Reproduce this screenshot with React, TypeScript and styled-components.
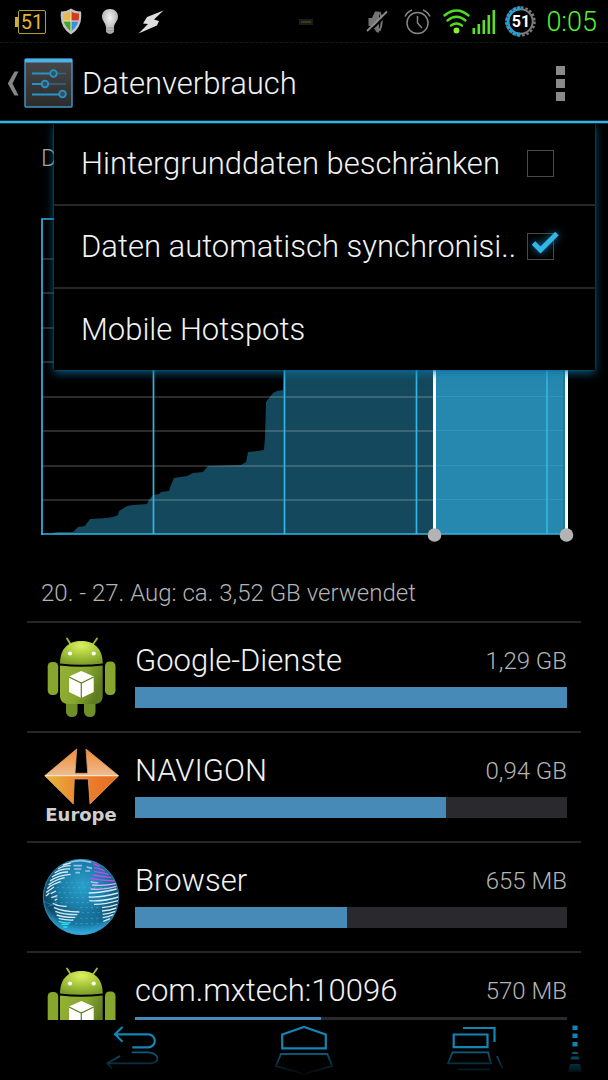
import React from 'react';
import styled, { createGlobalStyle } from 'styled-components';

const GlobalStyle = createGlobalStyle`
  * { box-sizing: border-box; }
  body { margin: 0; background: #000; }
  button { margin: 0; padding: 0; border: 0; background: none; color: inherit; font: inherit; }
  ul { margin: 0; padding: 0; list-style: none; }
  h1, h2, p { margin: 0; font-weight: inherit; }
  svg { display: block; }
`;

const Screen = styled.div`
  display: flex;
  flex-direction: column;
  height: 100vh;
  overflow: hidden;
  background: #000;
  color: #f2f2f2;
  font-family: Roboto, 'Liberation Sans', sans-serif;
  font-weight: 300;
`;

/* ---------- status bar ---------- */

const StatusBar = styled.div`
  flex: none;
  display: grid;
  grid-template-columns: 1fr auto 1fr;
  align-items: center;
  height: 43px;
  padding: 1px 11px 0 15px;
  border-bottom: 1px dashed #062020;
`;

const StatusGroup = styled.div<{ $end?: boolean; $gap: number }>`
  display: flex;
  align-items: center;
  justify-content: ${(p) => (p.$end ? 'flex-end' : 'flex-start')};
  gap: ${(p) => p.$gap}px;
`;

const BatteryBox = styled.span`
  display: flex;
  align-items: center;
  &::before {
    content: '';
    width: 3px;
    height: 10px;
    background: #d9ac2c;
  }
`;

const BatteryText = styled.span`
  width: 28px;
  height: 24px;
  border: 1px solid #b0a030;
  border-radius: 2px;
  color: #e6b530;
  font-size: 20px;
  font-weight: 400;
  line-height: 22px;
  text-align: center;
`;

const Pill = styled.span`
  width: 14px;
  height: 6px;
  border: 2px solid #1c1c1c;
  background: #3c3c10;
`;

const GearWrap = styled.span`
  display: grid;
  place-items: center;
  > * { grid-area: 1 / 1; }
`;

const GearText = styled.span`
  color: #fff;
  font-size: 16px;
  font-weight: 700;
  line-height: 20px;
`;

const Clock = styled.span`
  color: #55f22c;
  font-size: 27px;
  line-height: 32px;
`;

/* ---------- action bar ---------- */

const ActionBar = styled.header`
  flex: none;
  position: relative;
  z-index: 3;
  display: flex;
  align-items: center;
  justify-content: space-between;
  height: 80px;
  padding: 2px 43px 0 7px;
  border-bottom: 2px solid #33b5e5;
  background: #000;
  box-shadow: 0 1px 0 #0d3344, inset 0 -1px 0 #0d3344;
`;

const UpButton = styled.button`
  display: flex;
  align-items: center;
  gap: 5px;
`;

const Title = styled.h1`
  padding: 2px 0 0 4px;
  font-size: 31px;
  line-height: 40px;
`;

const OverflowButton = styled.button`
  display: flex;
  flex-direction: column;
  gap: 4px;
`;

const Dot = styled.span`
  width: 9px;
  height: 9px;
  background: #8a8a8a;
`;

/* ---------- overflow menu ---------- */

const Body = styled.div`
  flex: 1;
  min-height: 0;
  position: relative;
  overflow: hidden;
`;

const Menu = styled.div`
  position: absolute;
  z-index: 2;
  top: 0;
  left: 54px;
  right: 13px;
  background: #000;
  box-shadow: 0 0 2px #0a5c80, 0 3px 9px rgba(14, 118, 165, 0.75);
`;

const MenuItem = styled.label`
  display: flex;
  align-items: center;
  justify-content: space-between;
  height: 83px;
  padding: 0 41px 0 27px;
  border-bottom: 2px solid #262626;
  font-size: 31px;
  line-height: 40px;
  white-space: nowrap;
`;

const MenuAction = styled.button`
  display: block;
  width: 100%;
  height: 81px;
  padding: 0 27px;
  font-size: 31px;
  line-height: 40px;
  text-align: left;
`;

const CheckWrap = styled.span`
  position: relative;
  display: block;
  width: 27px;
  height: 27px;
  svg {
    position: absolute;
    left: 0;
    top: -7px;
    pointer-events: none;
    overflow: visible;
    filter: drop-shadow(0 0 4px #0a7fb5);
  }
  input:not(:checked) + svg { display: none; }
`;

const Check = styled.input`
  appearance: none;
  display: block;
  width: 27px;
  height: 27px;
  margin: 0;
  border: 1px solid #4a4a4a;
  background: #000;
`;

/* ---------- usage ---------- */

const Usage = styled.main`
  padding: 0 27px;
`;

const Cycle = styled.p`
  height: 95px;
  padding: 17px 14px 0;
  color: #a8a8a8;
  font-size: 24px;
  line-height: 36px;
`;

const ChartWrap = styled.div`
  padding: 0 14px;
  svg { width: 100%; height: 317px; overflow: visible; }
`;

const Summary = styled.h2`
  padding: 40px 14px 10px;
  color: #b4b4b4;
  font-size: 24px;
  line-height: 36px;
`;

const Row = styled.li`
  display: flex;
  align-items: flex-start;
  gap: 14px;
  height: 110px;
  padding: 14px 14px 0;
  border-top: 2px solid #262626;
`;

const AppIcon = styled.div`
  flex: none;
  width: 80px;
  height: 80px;
`;

const RowInfo = styled.div`
  flex: 1;
  padding-top: 4px;
`;

const RowHead = styled.div`
  display: flex;
  align-items: center;
  justify-content: space-between;
  height: 40px;
  margin-bottom: 6px;
`;

const AppName = styled.span`
  font-size: 31px;
  line-height: 40px;
`;

const Amount = styled.span`
  color: #b4b4b4;
  font-size: 24px;
  line-height: 36px;
`;

const Track = styled.div`
  height: 21px;
  background: #2a2a2e;
`;

const Fill = styled.div`
  height: 100%;
  background: #478ab8;
`;

const Region = styled.div`
  color: #cfcfcf;
  font-family: 'DejaVu Sans', sans-serif;
  font-size: 18px;
  font-weight: 700;
  line-height: 20px;
  text-align: center;
`;

/* ---------- navigation bar ---------- */

const NavBar = styled.nav`
  flex: none;
  position: relative;
  display: grid;
  grid-template-columns: 49px 1fr 1fr 1fr 49px;
  height: 60px;
  padding-top: 2px;
  background: #000;
`;

const NavButton = styled.button<{ $col: number; $edge?: boolean }>`
  grid-column: ${(p) => p.$col};
  display: flex;
  justify-content: ${(p) => (p.$edge ? 'flex-start' : 'center')};
  align-items: flex-start;
  padding-left: ${(p) => (p.$edge ? 8 : 0)}px;
`;

/* ---------- drawings ---------- */

const Shield = () => (
  <svg width="22" height="27" viewBox="0 0 22 27">
    <defs>
      <clipPath id="shieldClip"><path d="M11 3.5 Q14 5.500 19 5.500 Q20 17 11 23.500 Q2 17 3 5.500 Q8 5.500 11 3.500Z" /></clipPath>
    </defs>
    <path d="M11 0.500 Q15 3.500 21 3.500 Q23 19 11 26.500 Q-1 19 1 3.500 Q7 3.500 11 0.500Z" fill="#c4c4c4" />
    <g clipPath="url(#shieldClip)">
      <rect width="11" height="13" fill="#e8b84a" />
      <rect x="11" width="11" height="13" fill="#d23a1e" />
      <rect y="13" width="11" height="14" fill="#45a52a" />
      <rect x="11" y="13" width="11" height="14" fill="#3a8fe0" />
      <path d="M11 0V27M0 13H22" stroke="#e8e4d8" strokeWidth="1" />
    </g>
  </svg>
);

const Bulb = () => (
  <svg width="18" height="27" viewBox="0 0 18 27">
    <defs>
      <radialGradient id="bulbG" cx="0.5" cy="0.35" r="0.6">
        <stop offset="0" stopColor="#f2f2f2" />
        <stop offset="1" stopColor="#a8a8a8" />
      </radialGradient>
    </defs>
    <path d="M9 1C4 1 1 4.500 1 8.500C1 13 4.500 14.500 5 19V24Q9 28 13 24V19C13.500 14.500 17 13 17 8.500C17 4.500 14 1 9 1Z" fill="url(#bulbG)" />
    <path d="M5 20H13M5 22.500H13" stroke="#999" />
  </svg>
);

const Bolt = () => (
  <svg width="26" height="24" viewBox="0 0 26 24">
    <path d="M25.500 0.500L9 7L5 13.500L10 14L0.500 23.500L19 15.500L21 11L16 9.500Z" fill="#dedede" />
  </svg>
);

const Mute = () => (
  <svg width="22" height="25" viewBox="0 0 22 25">
    <path d="M2.500 9H6L9 2.500H13V23.500H11L6 17H2.500Z" fill="#747474" />
    <path d="M13.500 3Q18 12 13.500 22" stroke="#747474" strokeWidth="2" fill="none" />
    <path d="M2.500 23.500L22 4.500" stroke="#000" strokeWidth="2" />
    <path d="M1 22L21 2.500" stroke="#8c8c8c" strokeWidth="1.800" />
  </svg>
);

const Alarm = () => (
  <svg width="27" height="26" viewBox="0 0 27 26" fill="none" stroke="#858585" strokeWidth="1.500">
    <circle cx="13.500" cy="14" r="10.500" />
    <path d="M13.500 7V14L18 19M1 7.500Q3 3 8 1M26 7.500Q24 3 19 1" />
  </svg>
);

const Wifi = () => (
  <svg width="27" height="25" viewBox="0 0 27 25" fill="none" stroke="#50dc20" strokeWidth="2.300" strokeLinecap="round">
    <path d="M1.500 6.500Q13.500 -3.500 25.500 6.500" />
    <path d="M4.500 11.500Q13.500 4 22.500 11.500" />
    <path d="M8 16.500Q13.500 12.500 19 16.500" />
    <circle cx="13.500" cy="21.500" r="1.800" fill="#8cf030" stroke="#8cf030" />
  </svg>
);

const Signal = () => (
  <svg width="24" height="25" viewBox="0 0 24 25">
    {[6, 10, 14, 19, 24].map((h, i) => (
      <rect key={h} x={i * 5 + 0.5} y={25 - h} width="2.600" height={h} fill="#5ae02a" />
    ))}
  </svg>
);

const Gear = () => (
  <svg width="31" height="31" viewBox="0 0 31 31" fill="none">
    <circle cx="15.500" cy="15.500" r="14" stroke="#7a7a7a" strokeWidth="2.500" strokeDasharray="2.600 1.800" />
    <circle cx="15.500" cy="15.500" r="12.200" stroke="#7a7a7a" strokeWidth="2" />
    <path d="M15.500 1.500A14 14 0 0 0 15.500 29.500" stroke="#1fa0d8" strokeWidth="2.500" strokeDasharray="2.600 1.800" />
    <path d="M15.500 3.300A12.200 12.200 0 0 0 15.500 27.700" stroke="#1fa0d8" strokeWidth="2" />
  </svg>
);

const Chevron = () => (
  <svg width="12" height="25" viewBox="0 0 12 25">
    <path d="M7.500 0.500H11.500L5.500 12.500L11.500 24.500H7.500L0.800 12.500Z" fill="#858585" />
  </svg>
);

const SettingsIcon = () => (
  <svg width="49" height="50" viewBox="0 0 49 50">
    <defs>
      <linearGradient id="setG" x1="0" y1="0" x2="0" y2="1">
        <stop offset="0" stopColor="#484848" />
        <stop offset="1" stopColor="#2c2c2c" />
      </linearGradient>
    </defs>
    <rect x="1" y="1" width="47" height="48" rx="1" fill="url(#setG)" stroke="#3f93bf" strokeWidth="1.500" />
    <rect x="1" y="1" width="47" height="3.500" fill="#4db2e6" />
    <g stroke="#2e6a88" strokeWidth="1.600">
      <path d="M33 15.500H42M25 26H42" />
    </g>
    <g stroke="#2794c8" strokeWidth="1.800">
      <path d="M8 15.500H27M8 26H18M8 36.500H36" />
      <g fill="#38505c">
        <circle cx="29.500" cy="15.500" r="3.300" />
        <circle cx="21" cy="26" r="3.300" />
        <circle cx="38.500" cy="36" r="3.300" />
      </g>
    </g>
  </svg>
);

const AREA =
  'M11 315L17 314H32L37 309L44 308L46 305L49 301L65 300L72 299L77 297L78 293L86 288L92 287L106 286L108 282L112 277L118 276L120 274L128 273L130 267L133 260L146 258L152 255L162 254L167 248L200 247L205 244L207 234L217 233L223 232L224 219L225 184L232 175L236 173L242 172L244 120L393 60L526 10V316H11Z';

const UsageChart = () => (
  <ChartWrap>
    <svg viewBox="0 0 526 317" preserveAspectRatio="none" role="img" aria-label="Datenverbrauch">
      <defs>
        <clipPath id="before"><rect x="0" y="0" width="394" height="317" /></clipPath>
        <clipPath id="picked"><rect x="394" y="0" width="132" height="317" /></clipPath>
      </defs>
      <path d={AREA} fill="#14485c" clipPath="url(#before)" />
      <g fill="#fff" fillOpacity="0.17">
        {[40, 74, 109, 143, 178, 212, 247, 281].map((y) => (
          <rect key={y} x="1" y={y} width="525" height="2" />
        ))}
      </g>
      <path d={AREA} fill="#2688ae" clipPath="url(#picked)" />
      <g fill="#3da0c4" fillOpacity="0.5">
        {[178, 212, 247, 281].map((y) => (
          <rect key={y} x="395" y={y} width="130" height="1" />
        ))}
      </g>
      <path d="M1 317V1H526M112.500 1V316M243.500 1V316M375.500 1V316M506 1V316M0 316H526" fill="none" stroke="#33b5e5" strokeWidth="1.700" />
      <rect x="522" y="0" width="2" height="316" fill="#1b6a8a" fillOpacity="0.5" />
      <rect x="392" y="0" width="3" height="312" fill="#fff" />
      <rect x="524" y="0" width="3" height="312" fill="#fff" />
      <circle cx="393.500" cy="317" r="6.800" fill="#b4b4b4" />
      <circle cx="525.500" cy="317" r="6.800" fill="#b4b4b4" />
    </svg>
  </ChartWrap>
);

const Android = ({ id }: { id: string }) => (
  <svg width="80" height="80" viewBox="0 0 80 80">
    <defs>
      <linearGradient id={id + 'b'} x1="0" y1="0" x2="1" y2="0.400">
        <stop offset="0" stopColor="#94b234" />
        <stop offset="0.600" stopColor="#86a62e" />
        <stop offset="1" stopColor="#5f7c20" />
      </linearGradient>
      <radialGradient id={id + 'h'} cx="0.500" cy="0.200" r="0.800">
        <stop offset="0" stopColor="#dcf060" />
        <stop offset="0.500" stopColor="#a9c83c" />
        <stop offset="1" stopColor="#7d9d2a" />
      </radialGradient>
    </defs>
    <path d="M26 1.500L30 8M56 1.500L51.500 8" stroke="#9bbf38" strokeWidth="1.800" strokeLinecap="round" />
    <path d="M25 64H36.500V75Q36 80 31 80Q25.500 80 25 75ZM43 64H54.500V75Q54 80 49 80Q43.500 80 43 75Z" fill="#6f8f28" />
    <path d="M19 26.500C19 11 28 4 40.300 4S61.700 11 61.700 26.500Q40 29 19 26.500Z" fill={`url(#${id}h)`} />
    <path d="M19 28.500Q40 31 61.700 28.500V60Q61 67 54 67H27Q20 67 19 60Z" fill={`url(#${id}b)`} />
    <rect x="6.700" y="25" width="10.500" height="33" rx="4.500" fill="#86a62e" />
    <rect x="64" y="24.500" width="10.500" height="33.500" rx="4.500" fill="#86a62e" />
    <circle cx="29" cy="16.500" r="2.100" fill="#fff" />
    <circle cx="52.700" cy="16.500" r="2.100" fill="#fff" />
    <path d="M40.300 34L52.700 39.500V55L40.300 61L28 55V39.500Z" fill="#fff" />
    <path d="M28 40L40.300 46L52.700 40M40.300 46V61" fill="none" stroke="#5f7c20" strokeWidth="1.200" />
  </svg>
);

const Navigon = () => (
  <>
    <svg width="80" height="58" viewBox="0 0 80 58">
      <defs>
        <linearGradient id="navT" x1="0" y1="0" x2="0" y2="1">
          <stop offset="0" stopColor="#f08a34" />
          <stop offset="1" stopColor="#eebd92" />
        </linearGradient>
        <linearGradient id="navB" x1="0" y1="0" x2="1" y2="0">
          <stop offset="0" stopColor="#e4b83c" />
          <stop offset="0.450" stopColor="#ee8430" />
          <stop offset="1" stopColor="#e46c22" />
        </linearGradient>
      </defs>
      <path d="M35.700 2L3.700 28.700H77.700L45 2L46.700 26.300H34Z" fill="url(#navT)" />
      <path d="M3.700 28.700L32.300 57L33.300 32H47.300L49 57L77.700 28.700Z" fill="url(#navB)" />
      <path d="M35.700 2L3.700 28.700L32.300 57L33.300 32H47.300L49 57L77.700 28.700L45 2L46.700 26.300H34Z" fill="none" stroke="#dca070" strokeWidth="0.800" />
      <path d="M4 28.700H77" stroke="#fbe4c8" strokeWidth="1.300" />
    </svg>
    <Region>Europe</Region>
  </>
);

const Globe = () => (
  <svg width="80" height="80" viewBox="63 378 240 240">
    <defs>
      <radialGradient id="globeG" cx="0.520" cy="0.350" r="0.620">
        <stop offset="0" stopColor="#2ba0cc" />
        <stop offset="0.500" stopColor="#1b7ba4" />
        <stop offset="0.850" stopColor="#0d4662" />
        <stop offset="1" stopColor="#2a7ea8" />
      </radialGradient>
      <linearGradient id="globeL" x1="0" y1="0" x2="0" y2="1">
        <stop offset="0.650" stopColor="#1d9ed8" stopOpacity="0" />
        <stop offset="1" stopColor="#30b8ee" stopOpacity="0.800" />
      </linearGradient>
      <clipPath id="globeC"><circle cx="183" cy="498" r="114" /></clipPath>
    </defs>
    <circle cx="183" cy="498" r="114" fill="url(#globeG)" />
    <circle cx="183" cy="498" r="114" fill="url(#globeL)" />
    <g clipPath="url(#globeC)" fill="none">
      <path d="M120 455H250M110 470H260M115 485H200M105 500H200M105 515H205M180 530H240M185 545H240M180 562H240M165 578H240" stroke="#3db4e4" strokeWidth="3" strokeDasharray="7 9" opacity="0.6" />
      <path d="M150 394Q180 384 214 394M160 404H186M162 414H184M166 425H180M200 408L216 412M196 420H210" stroke="#8fc4ec" strokeWidth="5" />
      <g stroke="#d4ecfa" strokeWidth="4">
        <path d="M128 402L152 396M114 414Q130 404 152 404M104 426Q125 412 150 414M96 438Q120 422 144 423M90 450Q115 432 152 430M86 462Q105 446 134 440M82 473Q95 460 122 452M79 484L102 468M78 495L88 486M92 488L108 480M94 500L112 494M104 508L112 504" />
        <path d="M98 517Q118 528 140 526M102 530Q128 542 178 543M106 541Q130 551 172 551M110 552Q132 560 166 559M116 562Q136 568 160 567" />
        <path d="M206 486Q240 486 290 474M206 498Q245 500 294 486M208 509Q250 512 295 498M222 520Q260 520 294 509M246 530Q270 528 292 520M246 540Q270 538 289 531M248 550Q266 548 286 541M248 560Q264 558 280 551M250 571L270 563" />
      </g>
      <path d="M116 571Q136 577 152 575M124 580H146M130 588H142" stroke="#2ce0e8" strokeWidth="4" />
      <path d="M216 462Q250 466 288 458M212 474Q250 478 290 466M212 452Q220 456 234 455" stroke="#dcb4f4" strokeWidth="4" />
      <path d="M214 388L230 396M218 398L240 406M222 410Q240 412 254 420M222 421Q244 424 266 430M218 432Q244 436 274 440M208 442Q246 448 284 450" stroke="#c44cf0" strokeWidth="4" />
      <path d="M70 510L96 522M84 526L106 518M110 575L96 560" stroke="#2690c0" strokeWidth="2" />
    </g>
    <circle cx="183" cy="498" r="113" fill="none" stroke="#3a9cc8" strokeWidth="2" />
  </svg>
);

const Fade = ({ id }: { id: string }) => (
  <defs>
    <linearGradient id={id} gradientUnits="userSpaceOnUse" x1="0" y1="28" x2="0" y2="52">
      <stop offset="0" stopColor="#1385b5" stopOpacity="0.750" />
      <stop offset="1" stopColor="#1385b5" stopOpacity="0.050" />
    </linearGradient>
  </defs>
);

const BackIcon = () => (
  <svg width="60" height="56" viewBox="0 0 60 56" fill="none" stroke="#1385b5" strokeWidth="2.200">
    <Fade id="fBack" />
    <path d="M18.500 5L11 12.300L18.500 19.700M11 12.300H44.300A6.500 6.500 0 0 1 44.300 25.300H28.300" />
    <path d="M27.700 30.300H44Q53 31 53.500 36.500Q53 41.300 46 41.300H3.500M16 34L3.500 41.300L8 46.500" stroke="url(#fBack)" strokeWidth="1.800" />
  </svg>
);

const HomeIcon = () => (
  <svg width="60" height="56" viewBox="0 0 60 56" fill="none" stroke="#1385b5" strokeWidth="2.200">
    <Fade id="fHome" />
    <path d="M8.200 12.500L30 5L51.800 12.500V26.300H8.200Z" />
    <path d="M7 32H53.300L58 44L30 52L2 44Z" stroke="url(#fHome)" strokeWidth="1.800" />
  </svg>
);

const RecentIcon = () => (
  <svg width="60" height="56" viewBox="0 0 60 56" fill="none" stroke="#1385b5" strokeWidth="2.200">
    <Fade id="fRec" />
    <path d="M9.700 12.500H43.500V25.200H9.700ZM19 6H50.500V20" />
    <path d="M8.500 30.300H44L47 41.300H4ZM53 34L58.500 46.500M14 47.500H46" stroke="url(#fRec)" strokeWidth="1.800" />
  </svg>
);

const DotsIcon = () => (
  <svg width="16" height="56" viewBox="0 0 16 56" fill="#1385b5">
    <Fade id="fDots" />
    <path d="M5.500 3.500H10.500V8H5.500ZM5.500 11.500H10.500V16H5.500ZM5.500 20H10.500V24.500H5.500Z" />
    <path d="M5.500 30H10.500L11 32H5ZM4.500 34.500H11.500L12.500 37.500H3.500ZM3 42H13L15 50H1Z" fill="url(#fDots)" />
  </svg>
);

/* ---------- data ---------- */

const APPS = [
  { name: 'Google-Dienste', amount: '1,29 GB', share: 100, icon: <Android id="a1" /> },
  { name: 'NAVIGON', amount: '0,94 GB', share: 72, icon: <Navigon /> },
  { name: 'Browser', amount: '655 MB', share: 49, icon: <Globe /> },
  { name: 'com.mxtech:10096', amount: '570 MB', share: 43, icon: <Android id="a2" /> },
];

export default function App() {
  return (
    <Screen>
      <GlobalStyle />
      <StatusBar>
        <StatusGroup $gap={19}>
          <StatusGroup $gap={14}>
            <BatteryBox><BatteryText>51</BatteryText></BatteryBox>
            <Shield />
          </StatusGroup>
          <Bulb />
          <Bolt />
        </StatusGroup>
        <Pill />
        <StatusGroup $end $gap={12}>
          <StatusGroup $gap={16}>
            <Mute />
            <Alarm />
          </StatusGroup>
          <StatusGroup $gap={9}>
            <StatusGroup $gap={2}>
              <Wifi />
              <Signal />
            </StatusGroup>
            <StatusGroup $gap={10}>
              <GearWrap>
                <Gear />
                <GearText>51</GearText>
              </GearWrap>
              <Clock>0:05</Clock>
            </StatusGroup>
          </StatusGroup>
        </StatusGroup>
      </StatusBar>

      <ActionBar>
        <UpButton type="button">
          <Chevron />
          <SettingsIcon />
          <Title>Datenverbrauch</Title>
        </UpButton>
        <OverflowButton type="button" aria-label="Weitere Optionen">
          <Dot />
          <Dot />
          <Dot />
        </OverflowButton>
      </ActionBar>

      <Body>
        <Menu>
          <MenuItem>
            Hintergrunddaten beschränken
            <CheckWrap><Check type="checkbox" /></CheckWrap>
          </MenuItem>
          <MenuItem>
            Daten automatisch synchronisi..
            <CheckWrap>
              <Check type="checkbox" defaultChecked />
              <svg width="34" height="30" viewBox="0 0 34 30">
                <path d="M6.500 17L13.500 24L30 7.500" fill="none" stroke="#33b5e5" strokeWidth="5" />
              </svg>
            </CheckWrap>
          </MenuItem>
          <MenuAction type="button">Mobile Hotspots</MenuAction>
        </Menu>

        <Usage>
          <Cycle>D</Cycle>
          <UsageChart />
          <Summary>20. - 27. Aug: ca. 3,52 GB verwendet</Summary>
          <ul>
            {APPS.map((app) => (
              <Row key={app.name}>
                <AppIcon>{app.icon}</AppIcon>
                <RowInfo>
                  <RowHead>
                    <AppName>{app.name}</AppName>
                    <Amount>{app.amount}</Amount>
                  </RowHead>
                  <Track>
                    <Fill style={{ width: `${app.share}%` }} />
                  </Track>
                </RowInfo>
              </Row>
            ))}
          </ul>
        </Usage>
      </Body>

      <NavBar>
        <NavButton type="button" $col={2} aria-label="Zurück"><BackIcon /></NavButton>
        <NavButton type="button" $col={3} aria-label="Startseite"><HomeIcon /></NavButton>
        <NavButton type="button" $col={4} aria-label="Letzte Apps"><RecentIcon /></NavButton>
        <NavButton type="button" $col={5} $edge aria-label="Menü"><DotsIcon /></NavButton>
      </NavBar>
    </Screen>
  );
}
